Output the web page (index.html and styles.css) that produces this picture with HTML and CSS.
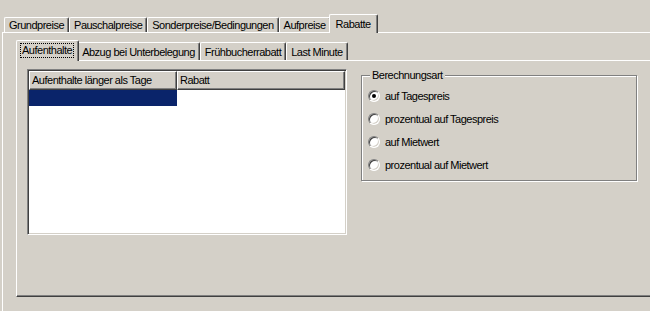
FILE: index.html
```html
<!DOCTYPE html>
<html lang="de">
<head>
  <meta charset="UTF-8" />
  <title>Rabatte</title>
  <link rel="stylesheet" href="styles.css">
</head>
<body>
  <div class="tabctl outer">
    <div class="tabstrip">
      <div class="tab">Grundpreise</div>
      <div class="tab">Pauschalpreise</div>
      <div class="tab">Sonderpreise/Bedingungen</div>
      <div class="tab">Aufpreise</div>
      <div class="tab active">Rabatte</div>
    </div>
    <div class="panel">
      <div class="tabctl inner">
        <div class="tabstrip">
          <div class="tab active"><span class="focus">Aufenthalte</span></div>
          <div class="tab">Abzug bei Unterbelegung</div>
          <div class="tab">Frühbucherrabatt</div>
          <div class="tab">Last Minute</div>
        </div>
        <div class="page">
          <div class="listview">
            <div class="lv-header">
              <div class="lv-col c1">Aufenthalte länger als Tage</div>
              <div class="lv-col c2">Rabatt</div>
            </div>
            <div class="lv-row">
              <div class="lv-cell c1 selected"></div>
              <div class="lv-cell c2"></div>
            </div>
          </div>

          <!-- Berechnungsart -->
          <fieldset class="groupbox">
            <legend>Berechnungsart</legend>
            <label class="option"><span class="radio checked"></span>auf Tagespreis</label>
            <label class="option"><span class="radio"></span>prozentual auf Tagespreis</label>
            <label class="option"><span class="radio"></span>auf Mietwert</label>
            <label class="option"><span class="radio"></span>prozentual auf Mietwert</label>
          </fieldset>
        </div>
      </div>
    </div>
  </div>
</body>
</html>
```
FILE: styles.css
```css
html, body { margin: 0; overflow: hidden; }
body { width: 650px; height: 311px; background: #d4d0c8; color: #000; font: 11px "Liberation Sans", Arial, sans-serif; letter-spacing: -0.5px; }

/* Tabs */
.tabstrip { display: flex; align-items: flex-end; padding-left: 2px; }
.tab { position: relative; box-sizing: border-box; padding: 0 4px; white-space: nowrap; border-top: 1px solid #fff; border-left: 1px solid #fff; border-right: 1px solid #404040; box-shadow: inset -1px 0 #808080; border-radius: 2px 2px 0 0; }
.tab.active { z-index: 1; margin: 0 -2px -1px; background: #d4d0c8; }

.outer { padding: 14px 0 0 2px; }
.outer .tabstrip { height: 18px; }
.outer .tab { height: 15px; line-height: 14px; }
.outer .tab.active { height: 19px; padding: 2px 6px 0; }

.panel { height: 300px; padding: 7px 0 0 13px; border-top: 1px solid #fff; border-left: 1px solid #fff; }

.inner .tabstrip { height: 20px; }
.inner .tab { height: 18px; padding-top: 2px; line-height: 15px; }
.inner .tab.active { height: 21px; padding: 2px 4px 0 3px; line-height: 13px; }
.focus { display: inline-block; border: 1px dotted #000; padding: 0 1px; }

.page { box-sizing: border-box; height: 237px; display: flex; align-items: flex-start; padding: 8px 0 0 10px; border-top: 1px solid #fff; border-left: 1px solid #fff; border-bottom: 1px solid #404040; box-shadow: inset 0 -1px #808080; }

/* List view */
.listview { box-sizing: border-box; width: 320px; height: 166px; padding: 1px; background: #fff; border: 1px solid; border-color: #808080 #fff #fff #808080; box-shadow: inset 1px 1px #404040, inset -1px -1px #d4d0c8; }
.lv-header { display: flex; height: 19px; }
.lv-col { box-sizing: border-box; padding: 0 2px; line-height: 17px; background: #d4d0c8; border: 1px solid; border-color: #fff #404040 #404040 #fff; box-shadow: inset -1px -1px #808080; white-space: nowrap; }
.lv-row { display: flex; height: 16px; }
.c1 { width: 148px; }
.c2 { flex: 1; }
.selected { background: #0a246a; }

/* Group box */
.groupbox { box-sizing: border-box; width: 276px; min-width: 0; margin: 0 0 0 14px; padding: 3px 0 4px 6px; border: 1px solid #808080; box-shadow: inset 1px 1px #fff, 1px 1px #fff; }
.groupbox legend { margin-left: 2px; padding: 0 2px; background: #d4d0c8; }
.option { display: flex; align-items: center; height: 23px; }
.radio { position: relative; box-sizing: border-box; width: 12px; height: 12px; margin-right: 5px; border-radius: 50%; background: #fff; border: 1px solid; border-color: #808080 #fff #fff #808080; box-shadow: inset 1px 1px #404040, inset -1px -1px #d4d0c8; }
.radio.checked::after { content: ""; position: absolute; left: 3px; top: 3px; width: 4px; height: 4px; border-radius: 50%; background: #000; }
```
